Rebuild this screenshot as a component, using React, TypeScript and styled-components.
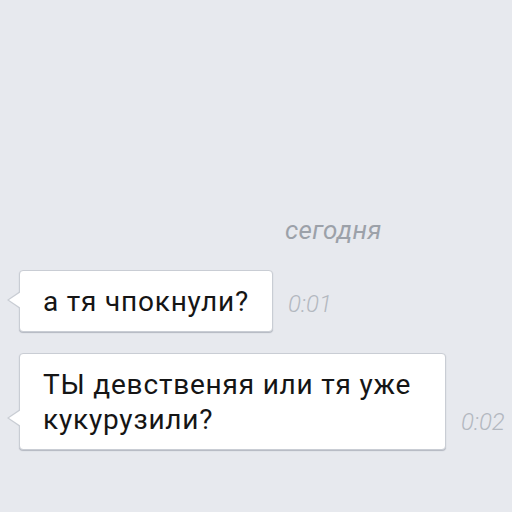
import React from 'react'
import styled, { createGlobalStyle } from 'styled-components'

const GlobalStyle = createGlobalStyle`
  html, body {
    margin: 0;
    padding: 0;
    background: #e7e9ee;
  }
  body {
    font-family: Roboto, 'Noto Sans', 'Liberation Sans', sans-serif;
  }
`

const Screen = styled.div`
  width: 512px;
  height: 512px;
  overflow: hidden;
  background: #e7e9ee;
  display: flex;
  flex-direction: column;
  padding-top: 214px;
  box-sizing: border-box;
`

const DateLabel = styled.div`
  padding-left: 285px;
  font-size: 26px;
  letter-spacing: 0.4px;
  font-style: italic;
  color: #9ca1a9;
  line-height: 32px;
  margin-bottom: 24px;
`

const Feed = styled.div`
  display: flex;
  flex-direction: column;
  gap: 21px;
  padding-left: 19px;
`

const Row = styled.div`
  display: flex;
  align-items: flex-end;
  gap: 15px;
`

const Bubble = styled.div<{ $maxWidth?: number }>`
  position: relative;
  background: #fff;
  border: 1px solid #c9cdd4;
  border-radius: 4px;
  box-shadow: 0 1px 1px rgba(60, 70, 90, 0.3);
  padding: 13px 23px 12px 23px;
  max-width: ${(p) => p.$maxWidth ?? 400}px;
  box-sizing: border-box;
  font-size: 28px;
  letter-spacing: 0.8px;
  line-height: 35px;
  color: #151515;

  &::before,
  &::after {
    content: '';
    position: absolute;
    bottom: 22px;
    width: 0;
    height: 0;
    border-style: solid;
  }
  &::before {
    left: -13px;
    border-width: 9px 13px 9px 0;
    border-color: transparent #c9cdd4 transparent transparent;
  }
  &::after {
    left: -11px;
    bottom: 23px;
    border-width: 8px 12px 8px 0;
    border-color: transparent #fff transparent transparent;
  }
`

const Time = styled.span`
  font-size: 24px;
  line-height: 28px;
  font-style: italic;
  font-weight: 300;
  color: #b3b8c0;
  padding-bottom: 14px;
  white-space: nowrap;
`

const messages = [
  { text: 'а тя чпокнули?', time: '0:01', maxWidth: 420 },
  { text: 'ТЫ девственяя или тя уже кукурузили?', time: '0:02', maxWidth: 427 },
]

export default function App() {
  return (
    <>
      <GlobalStyle />
      <Screen>
        <DateLabel>сегодня</DateLabel>
        <Feed>
          {messages.map((m) => (
            <Row key={m.time}>
              <Bubble $maxWidth={m.maxWidth}>{m.text}</Bubble>
              <Time>{m.time}</Time>
            </Row>
          ))}
        </Feed>
      </Screen>
    </>
  )
}
